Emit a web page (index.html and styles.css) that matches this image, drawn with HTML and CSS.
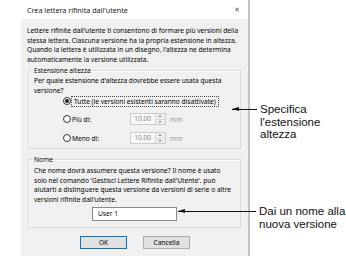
FILE: index.html
```html
<!DOCTYPE html>
<html lang="it">
<head>
<meta charset="utf-8">
<link rel="stylesheet" href="styles.css">
</head>
<body>
<div class="stage">
  <div class="dialog">
    <div class="titlebar">
      <span class="title">Crea lettera rifinita dall'utente</span>
      <span class="close">✕</span>
    </div>
    <div class="body">
      <div class="intro">
        <div>Lettere rifinite dall'utente ti consentono di formare più versioni della</div>
        <div>stessa lettera. Ciascuna versione ha la propria estensione in altezza.</div>
        <div>Quando la lettera è utilizzata in un disegno, l'altezza ne determina</div>
        <div>automaticamente la versione utilizzata.</div>
      </div>
      <fieldset class="group g1">
        <legend>Estensione altezza</legend>
        <div class="text">
          <div>Per quale estensione d'altezza dovrebbe essere usata questa</div>
          <div>versione?</div>
        </div>
        <div class="radio-row r1">
          <span class="radio checked"></span>
          <span class="rlabel focus">Tutte (le versioni esistenti saranno disattivate)</span>
        </div>
        <div class="radio-row r2">
          <span class="radio"></span>
          <span class="rlabel short">Più di:</span>
          <span class="spin"><span class="spin-val">10.00</span><span class="spin-btns"><span class="up"></span><span class="down"></span></span></span>
          <span class="unit">mm</span>
        </div>
        <div class="radio-row r3">
          <span class="radio"></span>
          <span class="rlabel short">Meno di:</span>
          <span class="spin"><span class="spin-val">10.00</span><span class="spin-btns"><span class="up"></span><span class="down"></span></span></span>
          <span class="unit">mm</span>
        </div>
      </fieldset>
      <fieldset class="group g2">
        <legend>Nome</legend>
        <div class="text">
          <div>Che nome dovrà assumere questa versione? Il nome è usato</div>
          <div>solo nel comando 'Gestisci Lettere Rifinite dall'Utente'. può</div>
          <div>aiutarti a distinguere questa versione da versioni di serie o altre</div>
          <div>versioni rifinite dall'utente.</div>
        </div>
        <div class="name-row"><span class="input">User 1</span></div>
      </fieldset>
      <div class="buttons">
        <span class="btn default">OK</span>
        <span class="btn">Cancella</span>
      </div>
    </div>
  </div>
  <div class="callout c1">
    <span class="arrow a1"></span>
    <span class="ctext">Specifica<br>l'estensione<br>altezza</span>
  </div>
  <div class="callout c2">
    <span class="arrow a2"></span>
    <span class="ctext">Dai un nome alla<br>nuova versione</span>
  </div>
</div>
</body>
</html>
```
FILE: styles.css
```css
html, body {
  margin: 0;
  padding: 0;
  background: #ffffff;
}
.stage {
  position: relative;
  width: 346px;
  height: 272px;
  overflow: hidden;
  font-family: "Noto Sans", "DejaVu Sans", sans-serif;
  font-size: 6.6px;
  color: #000;
}
.dialog {
  margin-left: 21px;
  width: 227px;
  border-right: 2px solid #c4c4c4;
  display: flex;
  flex-direction: column;
}
.titlebar {
  height: 19px;
  background: #ffffff;
  display: flex;
  align-items: center;
  justify-content: space-between;
  padding: 0 8px 0 6px;
}
.title {
  font-size: 7.2px;
  color: #1a1a1a;
}
.close {
  font-size: 7px;
  color: #555;
}
.body {
  background: #f0f0f0;
  height: 237px;
  padding: 7px 6px 0 6px;
  box-sizing: border-box;
  display: flex;
  flex-direction: column;
}
.intro div, .text div {
  line-height: 9.7px;
  white-space: nowrap;
}
.group {
  margin: 0 1px 0 1px;
  border: 1px solid #dadada;
  box-shadow: inset 1px 1px 0 #ffffff;
  padding: 0 5px;
  min-width: 0;
}
.group legend {
  padding: 0 1px;
  margin-left: -1px;
  line-height: 9px;
}
.g1 {
  margin-top: 1px;
  height: 83px;
  box-sizing: border-box;
}
.g1 .text {
  margin-top: 1px;
}
.radio-row {
  display: flex;
  align-items: center;
  padding-left: 29px;
  height: 12px;
}
.r1 { margin-top: 0; }
.r2 { margin-top: 6px; }
.r3 { margin-top: 7px; }
.radio {
  width: 6px;
  height: 6px;
  border: 1px solid #333;
  border-radius: 50%;
  background: #fff;
  position: relative;
  flex: none;
}
.radio.checked::after {
  content: "";
  position: absolute;
  left: 1px;
  top: 1px;
  width: 4px;
  height: 4px;
  border-radius: 50%;
  background: #222;
}
.rlabel {
  margin-left: 1px;
  white-space: nowrap;
}
.rlabel.focus {
  outline: 1px dotted #444;
  outline-offset: 0;
  padding: 0 2px;
}
.rlabel.short {
  width: 58px;
}
.spin {
  display: flex;
  width: 36px;
  height: 12px;
  border: 1px solid #cccccc;
  background: #f7f7f7;
  box-sizing: border-box;
}
.spin-val {
  flex: 1;
  text-align: right;
  padding-right: 4px;
  color: #8c8c8c;
  line-height: 10px;
}
.spin-btns {
  width: 9px;
  border-left: 1px solid #d8d8d8;
  display: flex;
  flex-direction: column;
  background: #efefef;
}
.spin-btns span {
  flex: 1;
  position: relative;
}
.spin-btns .up {
  border-bottom: 1px solid #d8d8d8;
}
.spin-btns .up::after,
.spin-btns .down::after {
  content: "";
  position: absolute;
  left: 2px;
  width: 0;
  height: 0;
  border-left: 2px solid transparent;
  border-right: 2px solid transparent;
}
.spin-btns .up::after {
  top: 1px;
  border-bottom: 2px solid #9a9a9a;
}
.spin-btns .down::after {
  top: 1px;
  border-top: 2px solid #9a9a9a;
}
.unit {
  margin-left: 4px;
  color: #9a9a9a;
}
.g2 {
  margin-top: 6px;
  height: 73px;
  box-sizing: border-box;
}
.g2 .text {
  margin-top: 2px;
}
.name-row {
  display: flex;
  padding-left: 58px;
  margin-top: 2px;
}
.input {
  width: 85px;
  height: 14px;
  box-sizing: border-box;
  border: 1px solid #8a8a8a;
  background: #fff;
  padding-left: 5px;
  line-height: 12px;
}
.buttons {
  display: flex;
  padding-left: 53px;
  gap: 16px;
  margin-top: 8px;
}
.btn {
  width: 47px;
  height: 13px;
  box-sizing: border-box;
  border: 1px solid #adadad;
  background: #e1e1e1;
  display: flex;
  align-items: center;
  justify-content: center;
}
.btn.default {
  border-color: #0078d7;
}
.callout {
  position: absolute;
  display: flex;
  align-items: flex-start;
  font-family: "Liberation Sans", Arial, sans-serif;
  font-size: 11.5px;
  line-height: 12.5px;
  color: #111;
}
.c1 {
  left: 232px;
  top: 103px;
}
.c2 {
  left: 178px;
  top: 205px;
}
.arrow {
  position: relative;
  height: 1px;
  background: #111;
  margin-top: 6px;
  margin-right: 3px;
}
.arrow::before {
  content: "";
  position: absolute;
  left: 0;
  top: -2px;
  border-top: 2.5px solid transparent;
  border-bottom: 2.5px solid transparent;
  border-right: 7px solid #111;
}
.a1 { width: 25px; }
.a2 { width: 78px; }
```
